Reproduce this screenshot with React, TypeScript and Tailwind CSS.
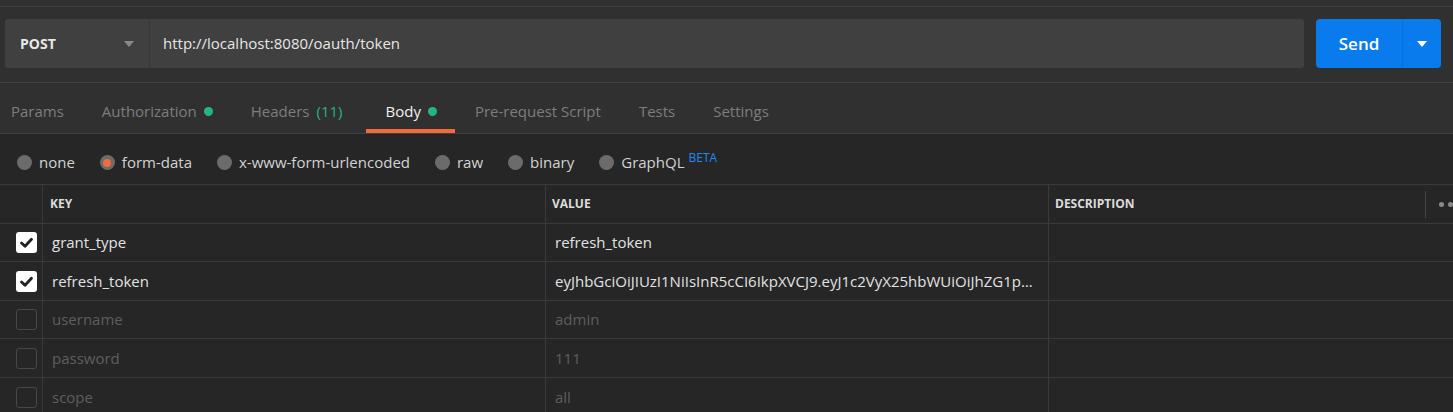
import React from "react";

const tabs = [
    { label: "Params" },
    { label: "Authorization", dot: true },
    { label: "Headers", count: "(11)" },
    { label: "Body", dot: true, active: true },
    { label: "Pre-request Script" },
    { label: "Tests" },
    { label: "Settings" },
];

const bodyModes = [
    { label: "none" },
    { label: "form-data", selected: true },
    { label: "x-www-form-urlencoded" },
    { label: "raw" },
    { label: "binary" },
    { label: "GraphQL", beta: true },
];

const rows = [
    { key: "grant_type", value: "refresh_token", on: true, h: "h-[38px]" },
    {
        key: "refresh_token",
        value: "eyJhbGciOiJIUzI1NiIsInR5cCI6IkpXVCJ9.eyJ1c2VyX25hbWUiOiJhZG1pbiIsInNjb3BlIjpbImFsbCJdLCJhdGkiOiI0YTk",
        on: true,
        h: "h-[39px]",
    },
    { key: "username", value: "admin", on: false, h: "h-[38px]" },
    { key: "password", value: "111", on: false, h: "h-[39px]" },
    { key: "scope", value: "all", on: false, h: "h-[39px]" },
];

function Caret({ color }: { color: string }) {
    return (
        <svg width="10" height="6" viewBox="0 0 10 6">
            <path d="M0 0 L10 0 L5 6 Z" fill={color} />
        </svg>
    );
}

function Checkbox({ on }: { on: boolean }) {
    if (!on) {
        return <div className="w-[21px] h-[21px] rounded-[3px] border border-[#474747]" />;
    }
    return (
        <div className="w-[21px] h-[21px] rounded-[3px] bg-white flex items-center justify-center">
            <svg width="21" height="21" viewBox="0 0 21 21">
                <path d="M5.5 11 L9 14.3 L15.5 7.2" fill="none" stroke="#222" strokeWidth="2.8" strokeLinecap="round" strokeLinejoin="round" />
            </svg>
        </div>
    );
}

export default function App() {
    return (
        <div className="w-[1453px] h-[412px] overflow-hidden bg-[#262626] font-['Open_Sans',sans-serif] text-[15px]">
            {/* Request bar */}
            <div className="bg-[#303030]">
                <div className="h-[7px] border-b border-[#3f3f3f]" />
                <div className="flex pl-[5px] pr-[12px] pt-[12px] pb-[14px] border-b border-[#3f3f3f]">
                    <div className="h-[49px] w-[145px] shrink-0 flex items-center justify-between pl-[15px] pr-[15px] bg-[#404040] rounded-l-[3px] border-r border-[#373737]">
                        <span className="text-[14px] font-bold text-[#e8e8e8]">POST</span>
                        <Caret color="#8a8a8a" />
                    </div>
                    <div className="h-[49px] flex-1 flex items-center pl-[13px] bg-[#404040] rounded-r-[3px] text-[#e6e6e6]">
                        http://localhost:8080/oauth/token
                    </div>
                    <div className="h-[49px] w-[125px] ml-[12px] shrink-0 flex rounded-[4px] bg-[#097bed] text-white">
                        <div className="w-[87px] flex items-center justify-center text-[17px] font-semibold border-r border-[#0a6fd8]">
                            Send
                        </div>
                        <div className="flex-1 flex items-center justify-center">
                            <Caret color="#ffffff" />
                        </div>
                    </div>
                </div>

                {/* Tabs */}
                <div className="h-[51px] flex border-b border-[#3f3f3f] pl-[11px]">
                    <div className="flex gap-[38px]">
                        {tabs.map((t) => (
                            <div key={t.label} className={`relative h-full flex items-center pt-[7px] gap-[7px] ${t.count ? "pr-[5px]" : ""}`}>
                                <span className={`flex ${t.active ? "text-[#f0f0f0]" : "text-[#7d7d7d]"}`}>
                                    {t.label}
                                    {t.count && <span className="ml-[7px] text-[#26b47f]">{t.count}</span>}
                                </span>
                                {t.dot && <span className="w-[9px] h-[9px] rounded-full bg-[#26b47f]" />}
                                {t.active && (
                                    <div className="absolute bottom-0 -left-[19px] -right-[18px] h-[4px] bg-[#f26b3a]" />
                                )}
                            </div>
                        ))}
                    </div>
                    <div className="ml-auto mr-[-60px] flex items-center pt-[7px] text-[#f26b3a]">Cookies</div>
                </div>
            </div>

            {/* Body modes */}
            <div className="h-[51px] flex items-center pt-[7px] pl-[17px] gap-[25px] border-b border-[#3a3a3a]">
                {bodyModes.map((m) => (
                    <div key={m.label} className="flex items-center gap-[7px]">
                        <span className="w-[15px] h-[15px] rounded-full bg-[#6b6b6b] flex items-center justify-center">
                            {m.selected && <span className="w-[8px] h-[8px] rounded-full bg-[#f26b3a]" />}
                        </span>
                        <span className="text-[#d2d2d2]">
                            {m.label}
                            {m.beta && <sup className="ml-[4px] text-[12px] text-[#1e8bf5]">BETA</sup>}
                        </span>
                    </div>
                ))}
            </div>

            {/* Table header */}
            <div className="h-[39px] flex border-b border-[#3a3a3a] text-[12px] font-bold text-[#dcdcdc]">
                <div className="w-[43px] shrink-0 border-r border-[#3a3a3a]" />
                <div className="w-[503px] shrink-0 border-r border-[#3a3a3a] flex items-center pl-[7px]">KEY</div>
                <div className="w-[503px] shrink-0 border-r border-[#3a3a3a] flex items-center pl-[6px]">VALUE</div>
                <div className="w-[420px] shrink-0 flex items-center pl-[6px]">
                    DESCRIPTION
                    <div className="ml-auto flex items-center pr-[7px]">
                        <div className="w-px h-[27px] bg-[#444]" />
                        <div className="ml-[13px] flex gap-[4px]">
                            <span className="w-[5px] h-[5px] rounded-full bg-[#8a8a8a]" />
                            <span className="w-[5px] h-[5px] rounded-full bg-[#8a8a8a]" />
                            <span className="w-[5px] h-[5px] rounded-full bg-[#8a8a8a]" />
                        </div>
                    </div>
                </div>
            </div>

            {/* Rows */}
            {rows.map((r) => (
                <div key={r.key} className={`${r.h} flex border-b border-[#3a3a3a]`}>
                    <div className="w-[43px] shrink-0 border-r border-[#3a3a3a] flex items-center pl-[16px]">
                        <Checkbox on={r.on} />
                    </div>
                    <div className={`w-[503px] shrink-0 border-r border-[#3a3a3a] flex items-center pl-[9px] ${r.on ? "text-[#e2e2e2]" : "text-[#5e5e5e]"}`}>
                        {r.key}
                    </div>
                    <div className={`w-[503px] shrink-0 border-r border-[#3a3a3a] flex items-center pl-[9px] pr-[14px] min-w-0 ${r.on ? "text-[#e2e2e2]" : "text-[#5e5e5e]"}`}>
                        <span className="truncate">{r.value}</span>
                    </div>
                    <div className="flex-1" />
                </div>
            ))}
        </div>
    );
}
